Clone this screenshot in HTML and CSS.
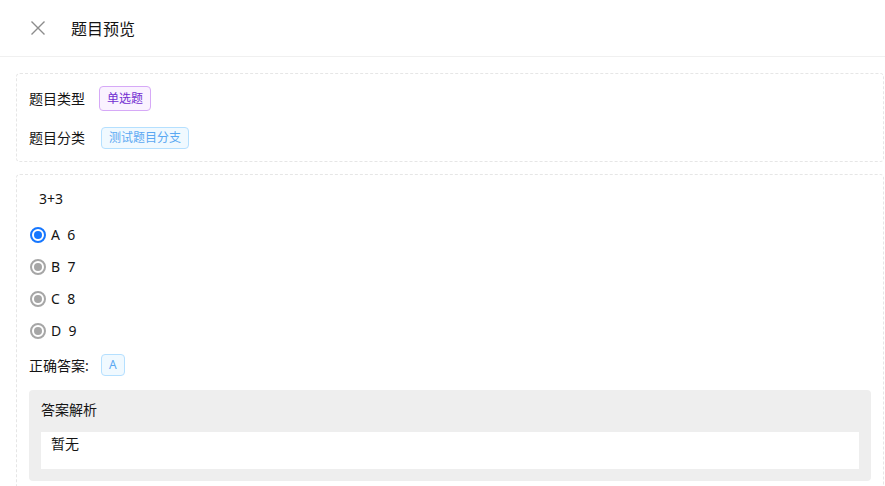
FILE: index.html
```html
<!DOCTYPE html>
<html lang="zh">
<head>
<meta charset="utf-8">
<link rel="stylesheet" href="styles.css">
</head>
<body>
<header class="header">
  <span class="close">
    <svg width="16" height="16" viewBox="0 0 16 16"><path d="M1.5 1.5 L14.5 14.5 M14.5 1.5 L1.5 14.5" stroke="#8c8c8c" stroke-width="1.4" fill="none"/></svg>
  </span>
  <span class="title">题目预览</span>
</header>
<main class="content">
  <section class="card meta">
    <div class="row"><span class="label">题目类型</span><span class="tag purple">单选题</span></div>
    <div class="row"><span class="label">题目分类</span><span class="tag blue shift">测试题目分支</span></div>
  </section>
  <section class="card question">
    <div class="stem">3+3</div>
    <div class="option"><span class="radio checked"></span><span class="opt-text">A&nbsp;&nbsp;6</span></div>
    <div class="option"><span class="radio"></span><span class="opt-text">B&nbsp;&nbsp;7</span></div>
    <div class="option"><span class="radio"></span><span class="opt-text">C&nbsp;&nbsp;8</span></div>
    <div class="option"><span class="radio"></span><span class="opt-text">D&nbsp;&nbsp;9</span></div>
    <div class="answer-row"><span class="answer-label">正确答案:</span><span class="tag blue small">A</span></div>
    <div class="analysis">
      <div class="analysis-title">答案解析</div>
      <div class="analysis-body">暂无</div>
    </div>
  </section>
</main>
</body>
</html>
```
FILE: styles.css
```css
* { box-sizing: border-box; }
html, body { margin: 0; padding: 0; background: #fff; }
body {
  font-family: "Noto Sans", "Noto Sans CJK SC", sans-serif;
  font-size: 14px;
  color: #141414;
  overflow: hidden;
}
.header {
  height: 57px;
  border-bottom: 1px solid #f0f0f0;
  display: flex;
  align-items: center;
  padding-left: 30px;
}
.close { display: flex; width: 16px; height: 16px; }
.title { margin-left: 25px; font-size: 16px; }
.content { padding: 16px 1px 0 16px; }
.card {
  border: 1px dashed #e6e6e6;
  border-radius: 4px;
  padding: 12px;
}
.meta { display: flex; flex-direction: column; gap: 16px; }
.row { display: flex; align-items: center; }
.label { width: 56px; line-height: 22px; margin-right: 14px; }
.tag {
  display: inline-flex;
  align-items: center;
  font-size: 12px;
  line-height: 20px;
  padding: 0 7px;
  border-radius: 4px;
  border: 1px solid;
}
.purple { background: #faf2ff; border-color: #d6a9f7; color: #722ed1; height: 25px; }
.blue { background: #f0f9ff; border-color: #b5e0ff; color: #5aa8f2; height: 22px; }
.shift { margin-left: 2px; }
.question { margin-top: 12px; padding-bottom: 40px; }
.stem { line-height: 24px; padding-left: 10px; }
.option { display: flex; align-items: center; height: 32px; }
.stem + .option { margin-top: 8px; }
.radio {
  width: 16px; height: 16px;
  border-radius: 50%;
  border: 2px solid #a6a6a6;
  position: relative;
  margin-left: 1px;
}
.radio::after {
  content: "";
  position: absolute;
  left: 2px; top: 2px;
  width: 8px; height: 8px;
  border-radius: 50%;
  background: #a6a6a6;
}
.radio.checked { border-color: #1677ff; }
.radio.checked::after { background: #1677ff; }
.opt-text { margin-left: 5px; line-height: 22px; }
.answer-row { display: flex; align-items: center; height: 24px; margin-top: 6px; }
.answer-label { width: 72px; }
.small { padding: 0 7px; }
.analysis {
  margin-top: 13px;
  background: #eeeeee;
  border-radius: 4px;
  padding: 10px 12px 12px;
}
.analysis-title { line-height: 20px; }
.analysis-body {
  margin-top: 12px;
  background: #fff;
  height: 37px;
  line-height: 24px;
  padding-left: 10px;
}
```
